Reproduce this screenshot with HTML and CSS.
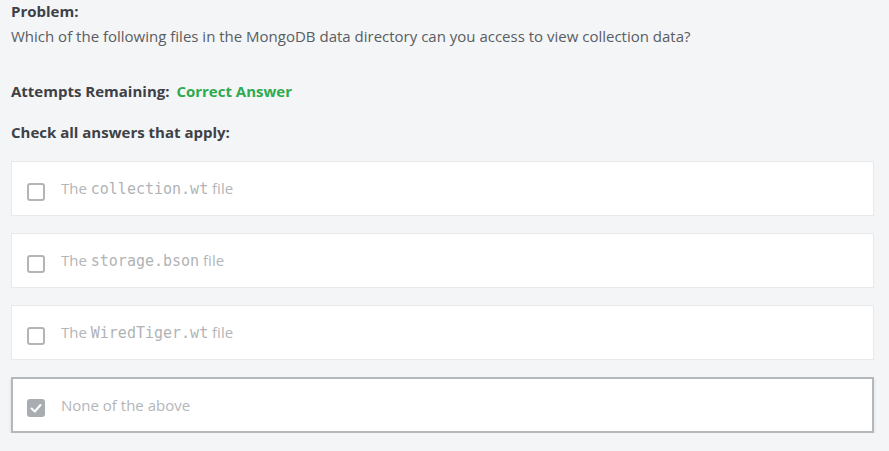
FILE: index.html
```html
<!DOCTYPE html>
<html>
<head>
<meta charset="utf-8">
<link rel="stylesheet" href="styles.css">
</head>
<body>
<div class="page">
  <div class="problem">
    <div class="label">Problem:</div>
    <div class="question">Which of the following files in the MongoDB data directory can you access to view collection data?</div>
  </div>
  <div class="attempts"><span class="label">Attempts Remaining:</span> <span class="correct">Correct Answer</span></div>
  <div class="check label">Check all answers that apply:</div>
  <div class="options">
    <div class="option"><span class="box"></span><span class="text">The <code>collection.wt</code> file</span></div>
    <div class="option"><span class="box"></span><span class="text">The <code>storage.bson</code> file</span></div>
    <div class="option"><span class="box"></span><span class="text">The <code>WiredTiger.wt</code> file</span></div>
    <div class="option selected"><span class="box checked"><svg viewBox="0 0 18 18" width="18" height="18"><path d="M4.5 9.5 L7.8 12.5 L13.5 6" fill="none" stroke="#fff" stroke-width="2" stroke-linecap="round" stroke-linejoin="round"/></svg></span><span class="text">None of the above</span></div>
  </div>
</div>
</body>
</html>
```
FILE: styles.css
```css
html, body { margin: 0; padding: 0; }
body { background: #f4f5f7; font-family: "Open Sans", "Noto Sans", sans-serif; color: #494c50; }
.page { padding: 1px 15px 0 11px; }
.label { font-weight: 700; font-size: 15px; color: #3d4146; }
.problem .label { line-height: 21px; }
.question { font-size: 15px; line-height: 28px; color: #595d62; }
.attempts { margin-top: 31px; font-size: 15px; line-height: 21px; }
.correct { color: #2eaa4f; font-weight: 700; margin-left: 3px; }
.check { margin-top: 20px; line-height: 21px; }
.options { margin-top: 18px; display: flex; flex-direction: column; gap: 17px; }
.option { background: #fff; border: 1px solid #e7e9eb; display: flex; align-items: center; padding-left: 15px; box-sizing: border-box; height: 55px; }
.option .box { width: 18px; height: 18px; box-sizing: border-box; border: 2px solid #b3b5b8; border-radius: 3px; margin-top: 6px; flex: none; display: flex; align-items: center; justify-content: center; }
.option .box.checked { background: #a9adb1; border-color: #a9adb1; }
.option .box.checked svg { flex: none; }
.option .text { margin-left: 16px; font-size: 15px; color: #b3b6b9; margin-top: -1px; }
.option code { font-family: "DejaVu Sans Mono", monospace; font-size: 15px; color: #b0b3b6; }
.option.selected { border: 2px solid #b5b8bb; box-shadow: 0 2px 3px rgba(0,0,0,0.12); padding-left: 14px; height: 56px; }
```
